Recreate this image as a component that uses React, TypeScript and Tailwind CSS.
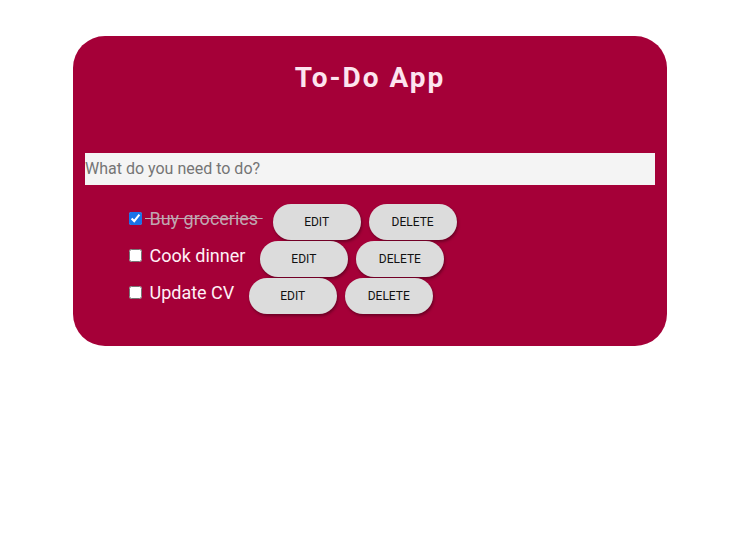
import React from "react";

const items = [
  { text: "Buy groceries", done: true },
  { text: "Cook dinner", done: false },
  { text: "Update CV", done: false },
];

export default function App() {
  return (
    <div className="w-[740px] h-[540px] bg-white pt-[36px]" style={{ fontFamily: "Roboto, 'Liberation Sans', sans-serif" }}>
      <div className="mx-[73px] w-[594px] h-[310px] rounded-[32px] bg-[#a50038] px-3 pt-[22px]">
        <h1 className="text-center text-[28px] leading-[40px] font-bold tracking-[2px] text-[#fde4ef]">To-Do App</h1>
        <input
          className="mt-[55px] block w-full h-[32px] pb-[2px] bg-[#f4f4f4] text-[16px] text-gray-700 placeholder:text-[#757575] outline-none"
          placeholder="What do you need to do?"
        />
        <ul className="mt-[19px] pl-[40px] flex flex-col gap-px">
          {items.map((it) => (
            <li key={it.text} className="flex items-baseline">
              <input type="checkbox" defaultChecked={it.done} className="w-[13px] h-[13px] ml-[4px] mr-[3px] self-center -mt-[8px] accent-[#1a73e8]" />
              <span className={it.done ? "text-[18px] text-[#c0a7b1] line-through whitespace-pre -translate-y-px" : "text-[18px] text-[#fff0f6] whitespace-pre -translate-y-px"}>{" " + it.text + " "}</span>
              <button className="ml-[10px] w-[88px] h-[36px] rounded-full bg-[#dcdcdc] text-[12px] text-[#111] shadow-[1px_2px_3px_rgba(0,0,0,0.35)]">EDIT</button>
              <button className="ml-[8px] w-[88px] h-[36px] rounded-full bg-[#dcdcdc] text-[12px] text-[#111] shadow-[1px_2px_3px_rgba(0,0,0,0.35)]">DELETE</button>
            </li>
          ))}
        </ul>
      </div>
    </div>
  );
}
